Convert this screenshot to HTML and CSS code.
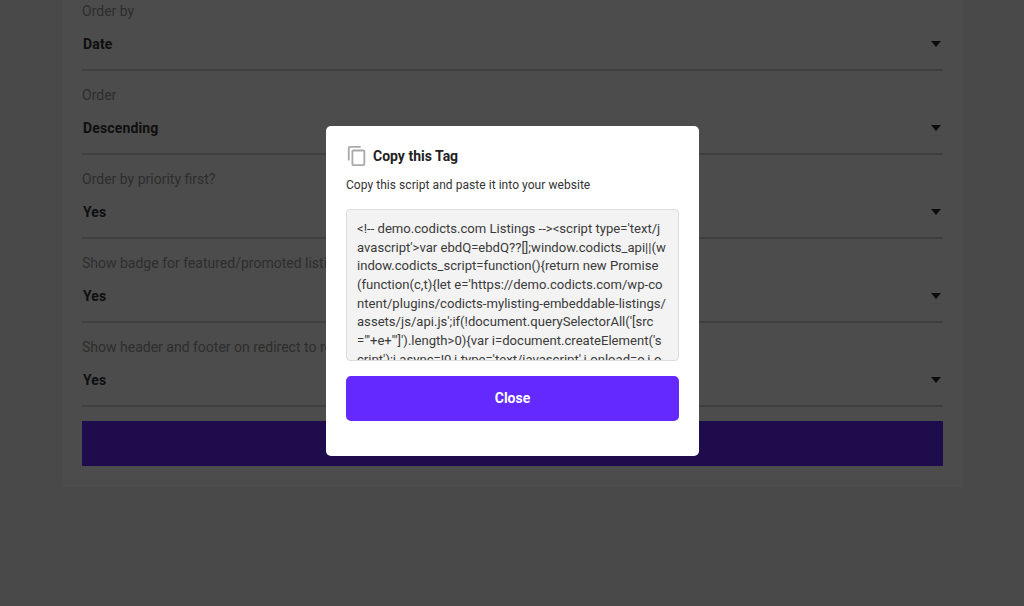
FILE: index.html
```html
<!DOCTYPE html>
<html lang="en">
<head>
    <meta charset="UTF-8">
    <meta name="viewport" content="width=device-width, initial-scale=1.0">
    <title>Copy this Tag</title>
    <link rel="stylesheet" href="styles.css">
</head>
<body>

    <div class="card">
        <div class="field">
            <div class="field-label">Order by</div>
            <div class="field-select"><span>Date</span><i class="arrow"></i></div>
        </div>
        <div class="field">
            <div class="field-label">Order</div>
            <div class="field-select"><span>Descending</span><i class="arrow"></i></div>
        </div>
        <div class="field">
            <div class="field-label">Order by priority first?</div>
            <div class="field-select"><span>Yes</span><i class="arrow"></i></div>
        </div>
        <div class="field">
            <div class="field-label">Show badge for featured/promoted listings?</div>
            <div class="field-select"><span>Yes</span><i class="arrow"></i></div>
        </div>
        <div class="field">
            <div class="field-label">Show header and footer on redirect to results page?</div>
            <div class="field-select"><span>Yes</span><i class="arrow"></i></div>
        </div>
        <button class="generate-btn">Generate</button>
    </div>

    <div class="overlay"></div>

    <div class="modal">
        <div class="modal-title">
            <svg class="copy-icon" viewBox="0 0 24 24" width="22" height="22">
                <path d="M16 1H4c-1.1 0-2 .9-2 2v14h2V3h12V1zm3 4H8c-1.1 0-2 .9-2 2v14c0 1.1.9 2 2 2h11c1.1 0 2-.9 2-2V7c0-1.1-.9-2-2-2zm0 16H8V7h11v14z"/>
            </svg>
            <h2>Copy this Tag</h2>
        </div>
        <p class="modal-text">Copy this script and paste it into your website</p>
        <div class="tag-code">&lt;!-- demo.codicts.com Listings --&gt;&lt;script type='text/j<br>avascript'&gt;var ebdQ=ebdQ??[];window.codicts_api||(w<br>indow.codicts_script=function(){return new Promise<br>(function(c,t){let e='https://demo.codicts.com/wp-co<br>ntent/plugins/codicts-mylisting-embeddable-listings/<br>assets/js/api.js';if(!document.querySelectorAll('[src<br>="'+e+'"]').length&gt;0){var i=document.createElement('s<br>cript');i.async=!0,i.type='text/javascript',i.onload=o,i.o</div>
        <button class="close-btn">Close</button>
    </div>

</body>
</html>
```

FILE: styles.css
```css
html, body {
    height: 100%;
}
body {
    margin: 0;
    height: 606px;
    overflow: hidden;
    background-color: #f5f5f5;
    font-family: Roboto, "Liberation Sans", sans-serif;
    color: #333;
}
.card {
    margin: 0 61px 0 62px;
    padding: 1px 20px 21px;
    background-color: white;
}
.field {
    margin-bottom: 14px;
    border-bottom: 2px solid #d4d4d4;
}
.field-label {
    height: 20px;
    line-height: 20px;
    font-size: 14px;
    color: #999;
}
.field-select {
    display: flex;
    justify-content: space-between;
    align-items: center;
    height: 46px;
    padding: 0 0 2px 1px;
    font-size: 14px;
    font-weight: 700;
    letter-spacing: 0.15px;
}
.arrow {
    margin-right: 2.5px;
    border-top: 6px solid #2b2b2b;
    border-left: 5.5px solid transparent;
    border-right: 5.5px solid transparent;
}
.generate-btn {
    display: block;
    width: 100%;
    height: 45px;
    border: 0;
    background-color: #6429ff;
    color: white;
    font: 700 14px Roboto, sans-serif;
}
.overlay {
    position: fixed;
    inset: 0;
    background-color: rgba(0, 0, 0, 0.7);
}
.modal {
    position: fixed;
    top: 126px;
    left: 326px;
    box-sizing: border-box;
    width: 373px;
    height: 330px;
    padding: 19px 20px;
    background-color: white;
    border-radius: 5px;
}
.modal-title {
    display: flex;
    align-items: center;
    gap: 5px;
}
.copy-icon {
    fill: #aaa;
}
.modal-title h2 {
    margin: 0;
    font-size: 14px;
    font-weight: 700;
    color: #222;
}
.modal-text {
    margin: 9px 0 15px;
    font-size: 12px;
    line-height: 18px;
    letter-spacing: 0.05px;
    color: #333;
}
.tag-code {
    box-sizing: border-box;
    height: 152px;
    padding: 10px;
    overflow: hidden;
    background-color: #f3f3f3;
    border: 1px solid #ddd;
    border-radius: 4px;
    font-size: 13.1px;
    line-height: 18.67px;
    white-space: nowrap;
    color: #3a3a3a;
}
.close-btn {
    display: block;
    width: 100%;
    height: 45px;
    margin-top: 15px;
    padding: 0 0 2px;
    border: 0;
    border-radius: 5px;
    background-color: #6429ff;
    color: white;
    font: 700 14px Roboto, sans-serif;
}
```
